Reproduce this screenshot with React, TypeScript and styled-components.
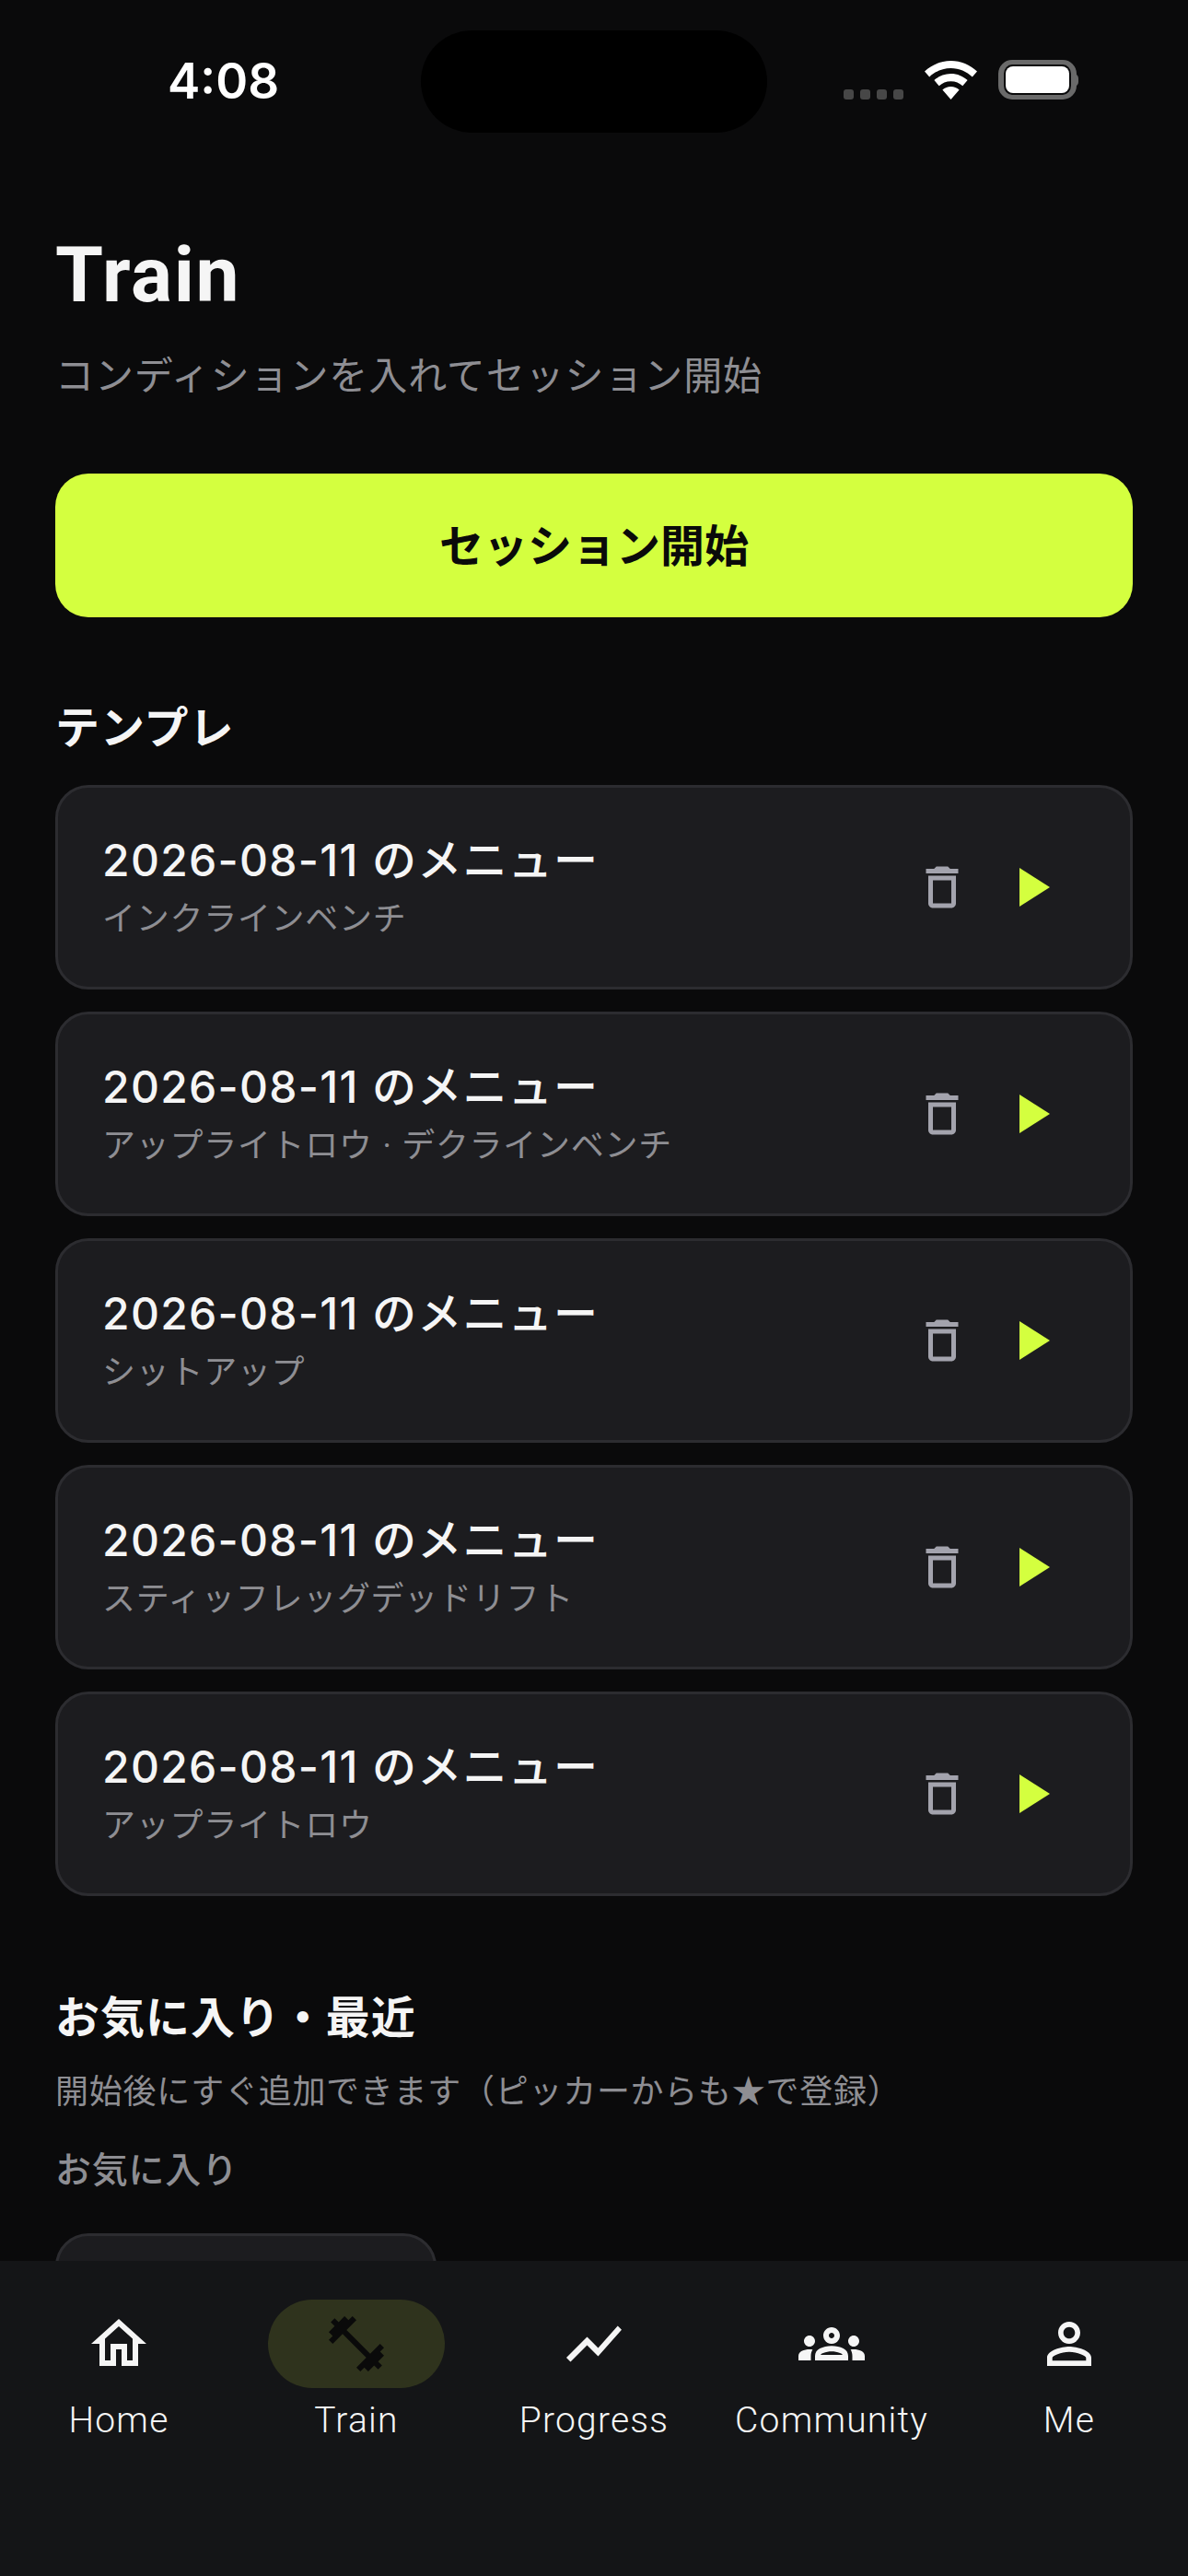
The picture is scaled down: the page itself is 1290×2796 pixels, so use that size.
import React from "react";
import styled, { createGlobalStyle } from "styled-components";

const latin = `"Roboto", "Noto Sans CJK JP", sans-serif`;

const Global = createGlobalStyle`
  html, body { margin: 0; padding: 0; background: #0a0a0b; }
  * { box-sizing: border-box; }
`;

const Phone = styled.div`
  position: relative;
  width: 1290px;
  height: 2796px;
  overflow: hidden;
  background: #0a0a0b;
  font-family: ${latin};
  color: #f5f5f5;
`;

const StatusBar = styled.div`
  height: 144px;
  padding-top: 33px;
  display: grid;
  grid-template-columns: 457px 376px 1fr;
`;

const Time = styled.div`
  padding: 24px 0 0 182px;
  font: 600 53px/1.2 "Inter", sans-serif;
  color: #fff;
`;

const Island = styled.div`
  height: 111px;
  border-radius: 56px;
  background: #000;
`;

const StatusIcons = styled.div`
  display: flex;
  align-items: flex-end;
  height: 75px;
  padding-left: 83px;
`;

const Dots = styled.div`
  display: flex;
  gap: 7px;
  margin-right: 23px;
`;

const Dot = styled.span`
  width: 11px;
  height: 11px;
  border-radius: 3px;
  background: #474747;
`;

const Battery = styled.div`
  position: relative;
  width: 85px;
  height: 43px;
  margin-left: 23px;
  padding: 2px;
  border: 5px solid #6a6a6a;
  border-left-width: 6px;
  border-right-width: 6px;
  border-radius: 15px;
  background: #0a0a0b;
  &::after {
    content: "";
    position: absolute;
    left: 76px;
    top: 10px;
    width: 5px;
    height: 14px;
    border-radius: 0 6px 6px 0;
    background: #6a6a6a;
  }
`;

const BatteryFill = styled.div`
  height: 100%;
  border-radius: 8px;
  background: #fff;
`;

const Main = styled.main`
  padding: 0 60px;
`;

const Title = styled.h1`
  margin: 105px 0 0;
  font: 700 84px/100px ${latin};
  letter-spacing: 1.68px;
  color: #f5f5f5;
`;

const Subtitle = styled.p`
  margin: 24px 0 0;
  font: 400 42px/64px "Noto Sans CJK JP", sans-serif;
  letter-spacing: 0.9px;
  color: #8e8e93;
`;

const StartButton = styled.button`
  display: block;
  width: 100%;
  height: 156px;
  margin-top: 77px;
  padding: 0 0 6px;
  border: 0;
  border-radius: 36px;
  background: #d4ff3f;
  color: #0a0a0a;
  font: 700 48px/1 "Noto Sans CJK JP", sans-serif;
`;

const SectionTitle = styled.h2<{ $top: number }>`
  margin: ${(p) => p.$top}px 0 0;
  font: 700 48px/64px "Noto Sans CJK JP", sans-serif;
  letter-spacing: 0.96px;
  color: #f5f5f5;
`;

const List = styled.div`
  display: flex;
  flex-direction: column;
  gap: 24px;
  margin-top: 34px;
`;

const Card = styled.div`
  display: flex;
  align-items: center;
  height: 222px;
  padding: 0 48px;
  border: 3px solid #2c2c30;
  border-radius: 36px;
  background: #1c1c1f;
`;

const CardText = styled.div`
  flex: 1;
  min-width: 0;
`;

const CardTitle = styled.div`
  margin: -5px 0 10px;
  font: 500 48px/60px "Inter", "Noto Sans CJK JP", sans-serif;
  letter-spacing: 1.3px;
  color: #f5f5f5;
`;

const CardSub = styled.div`
  margin-bottom: -5px;
  font: 400 36px/48px "Roboto", "Noto Sans CJK JP", sans-serif;
  letter-spacing: 0.72px;
  word-spacing: 1px;
  color: #8e8e93;
`;

const Actions = styled.div`
  display: flex;
  align-items: center;
  gap: 30px;
  margin-right: 24px;
`;

const TrashIcon = styled.svg`
  display: block;
  width: 60px;
  height: 60px;
  fill: #a3a3ad;
`;

const PlayIcon = styled.svg`
  display: block;
  width: 72px;
  height: 72px;
  fill: #d4ff3f;
`;

const Hint = styled.p`
  margin: 22px 0 0;
  font: 400 36px/54px "Noto Sans CJK JP", sans-serif;
  letter-spacing: 0.72px;
  color: #8e8e93;
`;

const SubLabel = styled.div`
  margin-top: 30px;
  font: 500 39px/56px "Noto Sans CJK JP", sans-serif;
  letter-spacing: 0.78px;
  color: #8e8e93;
`;

const FavCard = styled.div`
  width: 414px;
  height: 222px;
  margin-top: 44px;
  border: 3px solid #2c2c30;
  border-radius: 36px;
  background: #1c1c1f;
`;

const Nav = styled.nav`
  position: absolute;
  left: 0;
  right: 0;
  bottom: 0;
  height: 342px;
  padding-top: 42px;
  display: grid;
  grid-template-columns: repeat(5, 258px);
  align-items: start;
  background: #141517;
`;

const NavItem = styled.div`
  display: flex;
  flex-direction: column;
  align-items: center;
`;

const IconPill = styled.div<{ $active?: boolean }>`
  width: 192px;
  height: 96px;
  display: flex;
  align-items: center;
  justify-content: center;
  border-radius: 48px;
  background: ${(p) => (p.$active ? "#2f331d" : "transparent")};
`;

const NavIcon = styled.svg<{ $active?: boolean }>`
  display: block;
  width: 72px;
  height: 72px;
  fill: ${(p) => (p.$active ? "#0a0a0a" : "#f5f5f5")};
`;

const NavLabel = styled.div`
  margin-top: 10px;
  font: 300 39px/50px ${latin};
  letter-spacing: 1.2px;
  color: #f5f5f5;
  white-space: nowrap;
`;

const templates = [
  "インクラインベンチ",
  "アップライトロウ · デクラインベンチ",
  "シットアップ",
  "スティッフレッグデッドリフト",
  "アップライトロウ",
];

const navItems = [
  { label: "Home", d: "M12 5.69l5 4.5V18h-2v-6H9v6H7v-7.81l5-4.5M12 3L2 12h3v8h6v-6h2v6h6v-8h3L12 3z" },
  {
    label: "Train",
    active: true,
    d: "M20.57 14.86L22 13.43 20.57 12 17 15.57 8.43 7 12 3.43 10.57 2 9.14 3.43 7.71 2 5.57 4.14 4.14 2.71 2.71 4.14l1.43 1.43L2 7.71l1.43 1.43L2 10.57 3.43 12 7 8.43 15.57 17 12 20.57 13.43 22l1.43-1.43L16.29 22l2.14-2.14 1.43 1.43 1.43-1.43-1.43-1.43L22 16.29z",
  },
  { label: "Progress", d: "M3.5 18.49l6-6.01 4 4L22 6.92l-1.41-1.41-7.09 7.97-4-4L2 16.99z" },
  {
    label: "Community",
    d: "M4,13c1.1,0,2-0.9,2-2c0-1.1-0.9-2-2-2s-2,0.9-2,2C2,12.1,2.9,13,4,13z M5.13,14.1C4.76,14.04,4.39,14,4,14c-0.99,0-1.93,0.21-2.78,0.58C0.48,14.9,0,15.62,0,16.43V18l4.5,0v-1.61C4.5,15.56,4.73,14.78,5.13,14.1z M20,13c1.1,0,2-0.9,2-2c0-1.1-0.9-2-2-2s-2,0.9-2,2C18,12.1,18.9,13,20,13z M24,16.43c0-0.81-0.48-1.53-1.22-1.85C21.93,14.21,20.99,14,20,14c-0.39,0-0.76,0.04-1.13,0.1c0.4,0.68,0.63,1.46,0.63,2.29V18l4.5,0V16.43z M16.24,13.65c-1.17-0.52-2.61-0.9-4.24-0.9c-1.63,0-3.07,0.39-4.24,0.9C6.68,14.13,6,15.21,6,16.39V18h12v-1.61C18,15.21,17.32,14.13,16.24,13.65z M8.07,16c0.09-0.23,0.13-0.39,0.91-0.69c0.97-0.38,1.99-0.56,3.02-0.56s2.05,0.18,3.02,0.56c0.77,0.3,0.81,0.46,0.91,0.69H8.07z M12,8c0.55,0,1,0.45,1,1s-0.45,1-1,1s-1-0.45-1-1S11.45,8,12,8 M12,6c-1.66,0-3,1.34-3,3c0,1.66,1.34,3,3,3s3-1.34,3-3C15,7.34,13.66,6,12,6L12,6z",
  },
  {
    label: "Me",
    d: "M12 5.9c1.16 0 2.1.94 2.1 2.1s-.94 2.1-2.1 2.1S9.9 9.16 9.9 8s.94-2.1 2.1-2.1m0 9c2.97 0 6.1 1.46 6.1 2.1v1.1H5.9V17c0-.64 3.13-2.1 6.1-2.1M12 4C9.79 4 8 5.79 8 8s1.79 4 4 4 4-1.79 4-4-1.79-4-4-4zm0 9c-2.67 0-8 1.34-8 4v3h16v-3c0-2.66-5.33-4-8-4z",
  },
];

export default function App() {
  return (
    <Phone>
      <Global />
      <StatusBar>
        <Time>4:08</Time>
        <Island />
        <StatusIcons>
          <Dots>
            <Dot />
            <Dot />
            <Dot />
            <Dot />
          </Dots>
          <svg width="57" height="42" viewBox="0 0 57 42" fill="#fff">
            <path d="M28.5 0C17.6 0 7.7 4.300 0 11.500l5.200 6C11.400 11.600 19.500 8 28.500 8s17.100 3.600 23.300 9.500l5.200-6C49.300 4.300 39.400 0 28.500 0z" />
            <path d="M28.500 14c-7 0-13.300 2.700-18.100 7.100l5.300 6.100c3.400-3.100 7.800-5 12.800-5s9.400 1.900 12.800 5l5.300-6.100C41.800 16.700 35.500 14 28.500 14z" />
            <path d="M28.500 28c-3.500 0-6.700 1.300-9.100 3.500L28.500 42l9.100-10.500C35.200 29.300 32 28 28.500 28z" />
          </svg>
          <Battery>
            <BatteryFill />
          </Battery>
        </StatusIcons>
      </StatusBar>
      <Main>
        <Title>Train</Title>
        <Subtitle>コンディションを入れてセッション開始</Subtitle>
        <StartButton>セッション開始</StartButton>
        <SectionTitle $top={84}>テンプレ</SectionTitle>
        <List>
          {templates.map((t, i) => (
            <Card key={i}>
              <CardText>
                <CardTitle>2026-08-11 のメニュー</CardTitle>
                <CardSub>{t}</CardSub>
              </CardText>
              <Actions>
                <TrashIcon viewBox="0 0 24 24">
                  <path d="M6 19c0 1.100.9 2 2 2h8c1.100 0 2-.9 2-2V7H6v12zM8 9h8v10H8V9zm7.500-5l-1-1h-5l-1 1H5v2h14V4z" />
                </TrashIcon>
                <PlayIcon viewBox="0 0 24 24">
                  <path d="M8 5v14l11-7z" />
                </PlayIcon>
              </Actions>
            </Card>
          ))}
        </List>
        <SectionTitle $top={96}>お気に入り・最近</SectionTitle>
        <Hint>開始後にすぐ追加できます（ピッカーからも★で登録）</Hint>
        <SubLabel>お気に入り</SubLabel>
        <FavCard />
      </Main>
      <Nav>
        {navItems.map((n) => (
          <NavItem key={n.label}>
            <IconPill $active={n.active}>
              <NavIcon $active={n.active} viewBox="0 0 24 24">
                <path d={n.d} />
              </NavIcon>
            </IconPill>
            <NavLabel>{n.label}</NavLabel>
          </NavItem>
        ))}
      </Nav>
    </Phone>
  );
}
